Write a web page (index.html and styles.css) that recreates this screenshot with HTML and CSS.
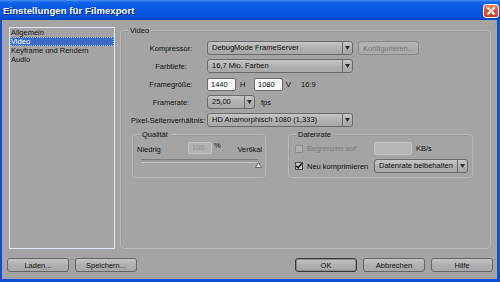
FILE: index.html
```html
<!DOCTYPE html>
<html lang="de">
<head>
<meta charset="utf-8">
<title>Einstellungen für Filmexport</title>
<link rel="stylesheet" href="styles.css">
</head>
<body>
<div class="window">
  <div class="titlebar">
    <span class="title">Einstellungen für Filmexport</span>
    <span class="close"><svg width="8" height="8" viewBox="0 0 8 8"><path d="M1 1 L7 7 M7 1 L1 7" stroke="#fff" stroke-width="1.8" stroke-linecap="square"/></svg></span>
  </div>
  <div class="client">
    <div class="main">
      <ul class="nav">
        <li>Allgemein</li>
        <li class="sel">Video</li>
        <li>Keyframe und Rendern</li>
        <li>Audio</li>
      </ul>
      <div class="group video">
        <span class="group-label">Video</span>
        <div class="form">
          <span class="lbl">Kompressor:</span>
          <div class="ctrl">
            <div class="select w146"><span class="val">DebugMode FrameServer</span><span class="arrow"><svg width="5" height="4" viewBox="0 0 5 4"><path d="M0 0H5L2.5 4Z" fill="#2e2e2e"/></svg></span></div>
            <span class="btn disabled konf">Konfigurieren...</span>
          </div>
          <span class="lbl">Farbtiefe:</span>
          <div class="ctrl">
            <div class="select w146"><span class="val">16,7 Mio. Farben</span><span class="arrow"><svg width="5" height="4" viewBox="0 0 5 4"><path d="M0 0H5L2.5 4Z" fill="#2e2e2e"/></svg></span></div>
          </div>
          <span class="lbl">Framegröße:</span>
          <div class="ctrl">
            <span class="input w29">1440</span>
            <span class="unit-h">H</span>
            <span class="input w29">1080</span>
            <span class="unit-v">V</span>
            <span class="ratio">16:9</span>
          </div>
          <span class="lbl">Framerate:</span>
          <div class="ctrl">
            <div class="select w48"><span class="val">25,00</span><span class="arrow"><svg width="5" height="4" viewBox="0 0 5 4"><path d="M0 0H5L2.5 4Z" fill="#2e2e2e"/></svg></span></div>
            <span class="fps">fps</span>
          </div>
          <span class="lbl lbl-pixel">Pixel-Seitenverhältnis:</span>
          <div class="ctrl">
            <div class="select w146"><span class="val">HD Anamorphisch 1080 (1,333)</span><span class="arrow"><svg width="5" height="4" viewBox="0 0 5 4"><path d="M0 0H5L2.5 4Z" fill="#2e2e2e"/></svg></span></div>
          </div>
        </div>
        <div class="subgroups">
          <div class="group quality">
            <span class="group-label">Qualität</span>
            <div class="q-row">
              <span class="q-low">Niedrig</span>
              <span class="q-mid"><span class="input disabled w24">100</span><span class="pct">%</span></span>
              <span class="q-high">Vertikal</span>
            </div>
            <div class="slider">
              <span class="thumb"><svg width="7" height="6" viewBox="0 0 7 6"><path d="M3.5 0.5 L6.5 5.5 H0.5 Z" fill="#f2f2f2" stroke="#6a6a6a" stroke-width="1"/></svg></span>
            </div>
          </div>
          <div class="group datarate">
            <span class="group-label">Datenrate</span>
            <div class="dr-grid">
              <span class="check disabled"></span>
              <span class="dis-text">Begrenzen auf:</span>
              <div class="ctrl"><span class="input disabled-light w38"></span><span class="kbs">KB/s</span></div>
              <span class="check"><svg width="8" height="8" viewBox="0 0 8 8"><path d="M1.2 3.8 L3.1 5.9 L6.8 1.6" fill="none" stroke="#111" stroke-width="1.6"/></svg></span>
              <span>Neu komprimieren</span>
              <div class="select w94"><span class="val">Datenrate beibehalten</span><span class="arrow"><svg width="5" height="4" viewBox="0 0 5 4"><path d="M0 0H5L2.5 4Z" fill="#2e2e2e"/></svg></span></div>
            </div>
          </div>
        </div>
      </div>
    </div>
    <div class="footer">
      <span class="btn">Laden...</span>
      <span class="btn">Speichern...</span>
      <span class="spacer"></span>
      <span class="btn default">OK</span>
      <span class="btn">Abbrechen</span>
      <span class="btn">Hilfe</span>
    </div>
  </div>
</div>
</body>
</html>
```

FILE: styles.css
```css
* { box-sizing: border-box; }
html, body { margin: 0; padding: 0; }
body {
  width: 500px;
  height: 282px;
  overflow: hidden;
  font-family: "Liberation Sans", Arial, sans-serif;
  font-size: 7.5px;
  color: #111;
  background: #a4a4a4;
}
.window {
  width: 500px;
  height: 282px;
  display: flex;
  flex-direction: column;
  background: #0b4ed6;
}
.titlebar {
  height: 20px;
  flex: none;
  display: flex;
  align-items: center;
  justify-content: space-between;
  padding: 0 1px 0 3px;
  background: linear-gradient(#4a94f7 0, #1467ea 2px, #0a5ce6 6px, #0557e3 60%, #0350d8 85%, #0443c2 100%);
}
.title {
  color: #fff;
  font-weight: bold;
  font-size: 9.5px;
  letter-spacing: 0.1px;
  text-shadow: 1px 1px 0 #0a2f8c;
  margin-top: 1px;
}
.close {
  width: 16px;
  height: 14px;
  margin-top: 1px;
  border: 1px solid #f4f4f4;
  border-radius: 3px;
  background: linear-gradient(#ef8a66, #e0552e 45%, #c9401c);
  display: flex;
  align-items: center;
  justify-content: center;
}
.client {
  flex: 1;
  margin: 0 3px 3px 2px;
  background: #a4a4a4;
  display: flex;
  flex-direction: column;
}
.main {
  display: flex;
  gap: 5px;
  padding: 7px 6px 0 7px;
  height: 229px;
}
.nav {
  width: 106px;
  height: 222px;
  margin: 0;
  padding: 0;
  list-style: none;
  border: 1px solid #e2e8f3;
}
.nav li {
  height: 9px;
  line-height: 9px;
  padding-left: 1px;
  white-space: nowrap;
}
.nav li.sel {
  background: #3b6bcb;
  color: #fff;
  outline: 1px dotted #a8bde6;
  outline-offset: -1px;
}
.group {
  position: relative;
  border: 1px solid #b8b8b8;
  border-radius: 4px;
  box-shadow: inset 1px 1px 0 #9a9a9a;
}
.group-label {
  position: absolute;
  top: -5px;
  left: 7px;
  padding: 0 2px;
  line-height: 9px;
  background: #a4a4a4;
}
.video {
  flex: 1;
  margin-top: 3px;
  height: 219px;
  padding: 10px 0 0 11px;
}
.form {
  display: grid;
  grid-template-columns: 70px auto;
  grid-auto-rows: 14px;
  column-gap: 1px;
  row-gap: 4px;
  margin-left: 4px;
  align-items: center;
}
.lbl {
  justify-self: center;
  white-space: nowrap;
}
.lbl-pixel { margin-right: 6px; }
.ctrl {
  display: flex;
  align-items: center;
  white-space: nowrap;
}
.select {
  display: flex;
  height: 14px;
  border: 1px solid #6a6a6a;
  border-radius: 3px;
  background: linear-gradient(#c6c6c6, #b0b0b0 50%, #a8a8a8);
}
.select .val {
  flex: 1;
  padding-left: 4px;
  line-height: 12px;
  white-space: nowrap;
  overflow: hidden;
}
.select .arrow {
  width: 10px;
  border-left: 1px solid #6a6a6a;
  display: flex;
  align-items: center;
  justify-content: center;
}
.w146 { width: 146px; }
.w48 { width: 48px; }
.w94 { width: 94px; }
.w29 { width: 29px; }
.w24 { width: 24px; }
.w38 { width: 38px; }
.btn {
  display: inline-flex;
  align-items: center;
  justify-content: center;
  width: 62px;
  height: 14px;
  border: 1px solid #666;
  border-radius: 3px;
  background: linear-gradient(#c4c4c4, #b0b0b0 50%, #a6a6a6);
  white-space: nowrap;
}
.btn.default {
  border-color: #3a3a3a;
  box-shadow: inset 0 0 0 1px #8a8a8a;
}
.btn.disabled {
  color: #777;
  border-color: #8a8a8a;
  background: linear-gradient(#b4b4b4, #a8a8a8);
}
.konf { width: 61px; margin-left: 5px; }
.input {
  display: inline-block;
  height: 13px;
  line-height: 11px;
  padding-left: 3px;
  border: 1px solid #6c6c6c;
  border-radius: 2px;
  background: #f8f8f8;
}
.input.disabled {
  height: 12px;
  line-height: 10px;
  background: #b2b2b2;
  border-color: #c6c6c6;
  color: #8e8e8e;
}
.input.disabled-light {
  height: 13px;
  background: #b6b6b6;
  border: 1px solid #c4c4c4;
}
.unit-h { margin-left: 4px; width: 14px; }
.unit-v { margin-left: 3px; }
.ratio { margin-left: 10px; }
.fps { margin-left: 6px; }
.subgroups {
  display: flex;
  margin-top: 7px;
  height: 44px;
}
.quality {
  width: 134px;
  padding: 7px 3px 0 4px;
}
.q-row {
  display: grid;
  grid-template-columns: 51px 48px 1fr;
  align-items: end;
  height: 12px;
}
.q-low { line-height: 8px; }
.q-mid { display: flex; align-items: flex-start; }
.pct { margin-left: 2px; line-height: 7px; }
.q-high { justify-self: end; line-height: 8px; }
.slider {
  position: relative;
  margin: 5px 0 0 4px;
  width: 117px;
  height: 4px;
  border-top: 1px solid #7e7e7e;
  border-bottom: 1px solid #c6c6c6;
  background: #9c9c9c;
}
.thumb {
  position: absolute;
  right: -4px;
  top: 2px;
  line-height: 0;
}
.datarate {
  width: 185px;
  margin-left: 22px;
  padding: 7px 0 0 6px;
}
.dr-grid {
  display: grid;
  grid-template-columns: 8px 63px auto;
  grid-template-rows: 13px 14px;
  column-gap: 4px;
  row-gap: 4px;
  align-items: center;
  white-space: nowrap;
}
.check {
  width: 8px;
  height: 8px;
  border: 1px solid #4e4e4e;
  background: #c9c9c9;
  position: relative;
  line-height: 0;
}
.check svg { position: absolute; left: -1px; top: -1px; }
.check.disabled {
  border-color: #8c8c8c;
  background: #b2b2b2;
}
.dis-text { color: #7c7c7c; }
.kbs { margin-left: 4px; }
.footer {
  display: flex;
  gap: 6px;
  padding: 9px 4px 0 5px;
}
.spacer { flex: 1; }
```
